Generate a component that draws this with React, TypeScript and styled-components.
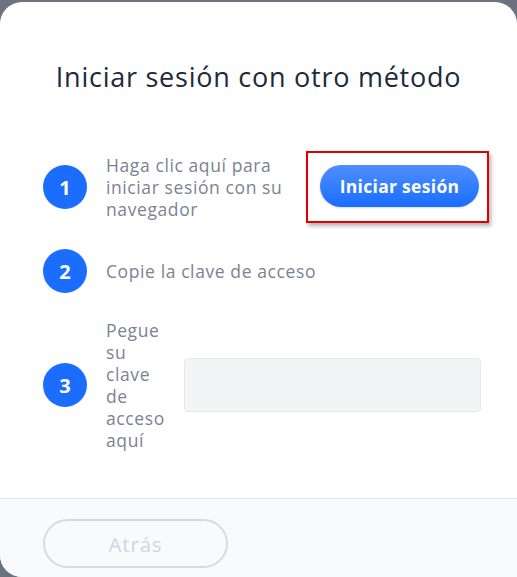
import styled, { createGlobalStyle } from 'styled-components';

const GlobalStyle = createGlobalStyle`
  html, body {
    margin: 0;
    padding: 0;
    background: #6b7280;
    font-family: "Open Sans", Lato, sans-serif;
  }
  * { box-sizing: border-box; }
`;

const steps = [1, 2, 3];

const App = () => {
  return (
    <>
      <GlobalStyle />
      <Modal>
        <Body>
          <Title>Iniciar sesión con otro método</Title>
          <Steps>
            <Step>
              <Circle>{steps[0]}</Circle>
              <StepText>Haga clic aquí para iniciar sesión con su navegador</StepText>
              <Highlight>
                <PrimaryButton>Iniciar sesión</PrimaryButton>
              </Highlight>
            </Step>
            <Step>
              <Circle>{steps[1]}</Circle>
              <StepText>Copie la clave de acceso</StepText>
            </Step>
            <Step>
              <Circle>{steps[2]}</Circle>
              <StepText narrow>Pegue su clave de acceso aquí</StepText>
              <KeyInput type="text" />
            </Step>
          </Steps>
        </Body>
        <Footer>
          <BackButton disabled>Atrás</BackButton>
        </Footer>
      </Modal>
    </>
  );
};

export default App;

const Modal = styled.div`
  margin-top: 2px;
  height: 575px;
  background: #ffffff;
  border-radius: 22px 22px 0 22px;
  overflow: hidden;
  display: flex;
  flex-direction: column;
`;

const Body = styled.div`
  flex-grow: 1;
  padding: 59px 28px 0 43px;
`;

const Title = styled.h1`
  margin: 0 0 0 -43px;
  width: 517px;
  text-align: center;
  font-size: 27px;
  line-height: 32px;
  letter-spacing: 0.75px;
  font-weight: 400;
  color: #1e293b;
`;

const Steps = styled.div`
  margin-top: 58px;
  display: flex;
  flex-direction: column;
  gap: 26px;
`;

const Step = styled.div`
  display: flex;
  align-items: center;
  gap: 19px;
`;

const Circle = styled.div`
  flex: none;
  width: 44px;
  height: 44px;
  border-radius: 50%;
  background: #1a6dff;
  color: #ffffff;
  font-size: 20px;
  font-weight: 700;
  display: flex;
  align-items: center;
  justify-content: center;
`;

const StepText = styled.div<{ narrow?: boolean }>`
  flex: 1 1 auto;
  font-size: 17.5px;
  line-height: 22px;
  letter-spacing: 0.6px;
  color: #7b8391;
  width: ${({ narrow }) => (narrow ? 'min-content' : 'auto')};
  flex-grow: ${({ narrow }) => (narrow ? 0 : 1)};
`;

const Highlight = styled.div`
  flex: none;
  padding: 12px 8px 14px 12px;
  border: 2px solid #e00000;
  box-shadow: 2px 3px 4px rgba(0, 0, 0, 0.3);
`;

const PrimaryButton = styled.button`
  display: block;
  width: 159px;
  height: 42px;
  border: none;
  border-radius: 21px;
  background: linear-gradient(#4f8fff, #1a6dff);
  color: #ffffff;
  font-family: inherit;
  font-size: 17.5px;
  letter-spacing: 0.3px;
  font-weight: 700;
  box-shadow: 0 1px 2px rgba(0, 0, 0, 0.15);
`;

const KeyInput = styled.input`
  flex: 1;
  height: 54px;
  margin-right: 8px;
  background: #f3f4f6;
  border: 1px solid #e5e7eb;
  border-radius: 4px;
`;

const Footer = styled.div`
  flex: none;
  height: 79px;
  border-top: 1px solid #e5e7eb;
  background: #f9fafb;
  padding: 20px 43px 0;
`;

const BackButton = styled.button`
  width: 185px;
  height: 49px;
  border: 2px solid #d7dae0;
  border-radius: 25px;
  background: transparent;
  color: #d1d5db;
  font-family: inherit;
  font-size: 20.5px;
  letter-spacing: 0.8px;
`;
